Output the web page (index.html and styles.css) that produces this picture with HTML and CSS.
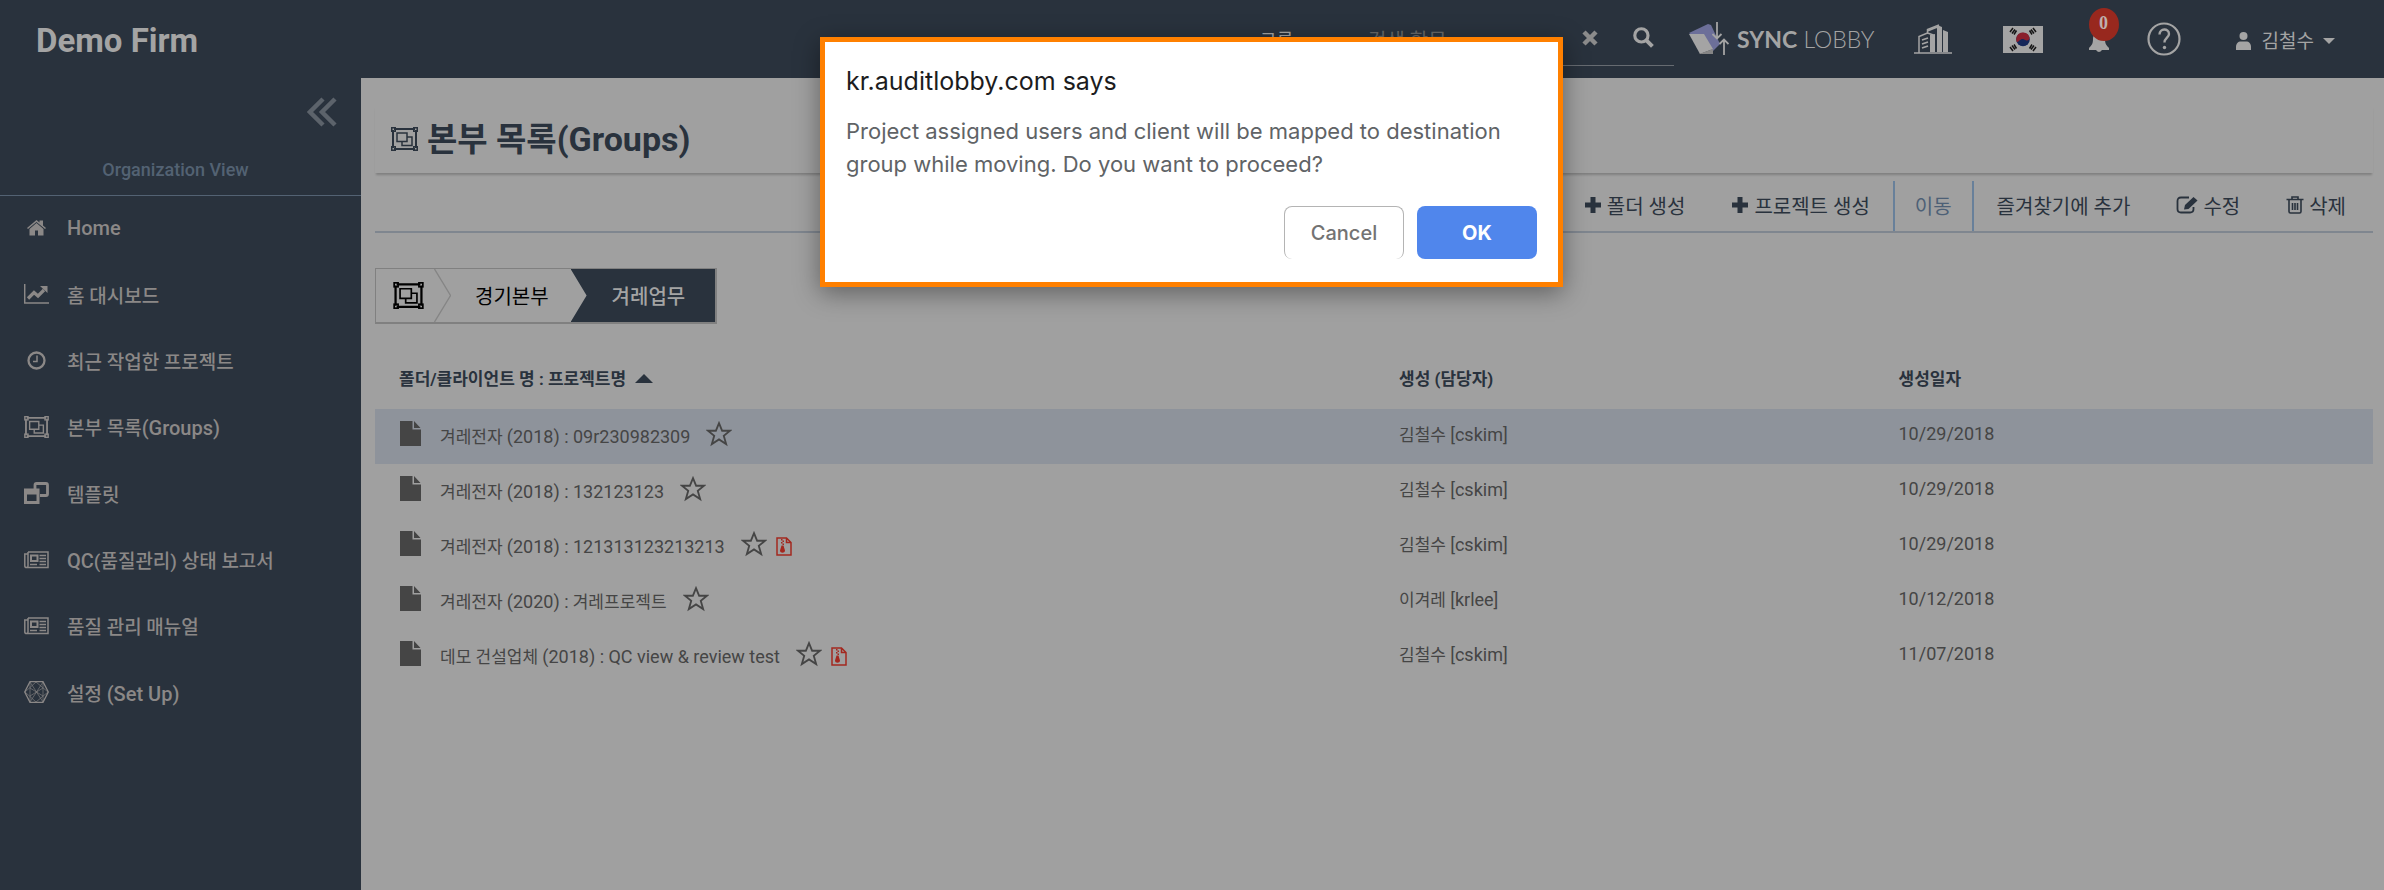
FILE: index.html
```html
<!DOCTYPE html>
<html lang="ko">
<head>
<meta charset="utf-8">
<title>본부 목록(Groups)</title>
<link rel="stylesheet" href="styles.css">
</head>
<body>
<svg class="defs" aria-hidden="true">
  <symbol id="i-group" viewBox="0 0 27 24"><path d="M3 2h21M3 22h21M2 3v18M25 3v18" fill="none" stroke="currentColor" stroke-width="2"/><g fill="none" stroke="currentColor" stroke-width="1.5"><rect x=".75" y=".75" width="3.5" height="3.5" class="knot"/><rect x="22.75" y=".75" width="3.5" height="3.5" class="knot"/><rect x=".75" y="19.75" width="3.5" height="3.5" class="knot"/><rect x="22.75" y="19.75" width="3.5" height="3.5" class="knot"/><path d="M6 6h10v8.500H6zM16.500 10H21v8.500H11v-4"/></g></symbol>
  <symbol id="i-star" viewBox="0 0 24 24"><path d="M12 2l2.900 7h7.300l-5.800 4.700 2.200 7.600L12 17l-6.600 4.300 2.200-7.600L1.800 9h7.300z" fill="none" stroke="currentColor" stroke-width="1.700"/></symbol>
  <symbol id="i-file" viewBox="0 0 21 25"><path d="M0 0h12.500v8.500H21V25H0zM14 0l6.500 7H14z" fill="currentColor"/></symbol>
  <symbol id="i-zip" viewBox="0 0 16 19"><path d="M1 1h9.500L15 5.500V18H1zM10.500 1v4.500H15" fill="none" stroke="currentColor" stroke-width="1.500"/><path d="M5 2h1.500v1.500H5zM6.500 3.500H8V5H6.500zM5 5h1.500v1.500H5zM6.500 6.500H8V8H6.500zM5.500 8.500h2l1.500 5c0 3-5 3-5 0z" fill="currentColor"/></symbol>
  <symbol id="i-plus" viewBox="0 0 18 18"><path d="M6.500 1h5v5.500H17v5h-5.500V17h-5v-5.500H1v-5h5.500z" fill="currentColor"/></symbol>
  <symbol id="i-news" viewBox="0 0 25 18"><g fill="none" stroke="currentColor" stroke-width="1.500"><path d="M4 1h20v15.500H2.500Q.8 16.500.8 15V3H4M4 1v14q0 1.500-1.500 1.500"/><path d="M7 4.500h6.500V10H7z" stroke-width="2"/><path d="M15.500 4.500H22M15.500 7.500H22M15.500 10.500H22M6 13.500h7M15.500 13.500H22"/></g></symbol>
</svg>

<header class="topbar">
  <a class="brand" href="#">Demo Firm</a>
  <form class="search">
    <select aria-label="검색 구분"><option>그룹</option></select>
    <input type="text" placeholder="검색 항목" aria-label="검색 항목">
    <button type="button" aria-label="지우기"><svg class="x" viewBox="0 0 16 16"><path d="M2 2l12 12M14 2L2 14" stroke="currentColor" stroke-width="4.500"/></svg></button>
    <button type="submit" aria-label="검색"><svg class="glass" viewBox="0 0 20 20"><circle cx="8" cy="8" r="6.300" fill="none" stroke="currentColor" stroke-width="3"/><path d="M12.500 12.500l6 6" stroke="currentColor" stroke-width="3.800"/></svg></button>
  </form>
  <a class="sync" href="#">
    <svg viewBox="0 0 40 34"><path d="M0 11L19 2l3 1 9 19-7 7z" fill="#6c6f99"/><path d="M0 12h15l9 15-13 5z" fill="#a4a4a4"/><path d="M10 32l14-5v5z" fill="#858585"/><path d="M28 0v16M23.500 12l4.500 4.500 4.500-4.500M35 33V17M30.500 22l4.500-4.500 4.500 4.500" fill="none" stroke="#a4a4a4" stroke-width="1.800"/></svg>
    <span><b>SYNC</b> LOBBY</span>
  </a>
  <a class="firm" href="#" aria-label="회사"><svg viewBox="0 0 38 30"><path d="M0 29h38" stroke="currentColor" stroke-width="1.300"/><path d="M5 29V12.500l8.500-3.500V5.500L25 1M13.500 9l6 2" fill="none" stroke="currentColor" stroke-width="1.500"/><path d="M16 11l5-1v18h-5zM23 1l5 2v25h-5zM29 6l5 2v20h-5zM13 6l10-4v2l-10 4z" fill="currentColor"/><path d="M8 16l6-2M8 20l6-2M8 24l6-2" stroke="currentColor" stroke-width="1.800"/></svg></a>
  <a class="flag" href="#" aria-label="한국어"><svg viewBox="0 0 40 27"><path d="M0 0h40v27H0z" fill="#a4a4a4"/><circle cx="20" cy="13.500" r="6.800" fill="#15275a"/><path d="M13.500 15.500a6.800 6.800 0 0 1 12.900-4.500c.8 2.500-1.500 4-3.600 3.300-2-.7-2.500-1.800-4.800-.9s-3 3.800-4.500 2.100z" fill="#8a1f2c"/><g stroke="#151515" stroke-width="1.500"><path d="M7 6l3-4M9 7.500l3-4M11 8.500l2.500-4M33 6l-3-4M31 7.500l-3-4M29 8.500L26.500 4.500M7 21l3 4M9 19.500l3 4M11 18.500l2.500 4M33 21l-3 4M31 19.500l-3 4M29 18.500l-2.500 4"/></g></svg></a>
  <a class="bell" href="#" aria-label="알림"><svg viewBox="0 0 20 22"><path d="M10 1c4 0 6 3 6 7 0 5 1.500 6.500 4 9v2h-7q-3 4-6 0H0v-2c2.500-2.500 4-4 4-9 0-4 2-7 6-7z" fill="currentColor"/></svg><span class="badge">0</span></a>
  <a class="help" href="#" aria-label="도움말"><svg viewBox="0 0 34 34"><circle cx="17" cy="17" r="15.500" fill="none" stroke="currentColor" stroke-width="2.200"/><path d="M12.500 12.500c0-6.500 9.500-6.500 9.500-.5 0 3.500-4.500 4-4.500 8.500" fill="none" stroke="currentColor" stroke-width="2.400"/><circle cx="17.500" cy="25.500" r="1.700" fill="currentColor"/></svg></a>
  <button class="user" type="button"><svg class="person" viewBox="0 0 15 18"><circle cx="7.500" cy="4" r="4" fill="currentColor"/><path d="M0 18v-3c0-3.500 2-5.500 5-5.500h5c3 0 5 2 5 5.500v3z" fill="currentColor"/></svg>김철수<svg class="caret" viewBox="0 0 12 6"><path d="M0 0h12L6 6z" fill="currentColor"/></svg></button>
</header>

<div class="layout">
  <aside class="sidebar">
    <button class="collapse" type="button" aria-label="메뉴 접기"><svg viewBox="0 0 30 30"><path d="M16 2L3 15l13 13M28 2L15 15l13 13" fill="none" stroke="currentColor" stroke-width="4.500"/></svg></button>
    <p class="view">Organization View</p>
    <nav class="menu">
      <a href="#"><svg class="small" viewBox="0 0 19 16"><path d="M0 8.500L9.500.5l3 2.500V1h3.500v5l3 2.500-1 1-8.500-7-8.500 7z" fill="currentColor"/><path d="M2.500 9.500l7-6 7 6V16H11v-5H8v5H2.500z" fill="currentColor"/></svg><span class="latin">Home</span></a>
      <a href="#"><svg viewBox="0 0 25 20"><path d="M.7 0v19H25" fill="none" stroke="currentColor" stroke-width="1.500"/><path d="M4 14.500L10 8.500l4 3.500 6-6" fill="none" stroke="currentColor" stroke-width="3.200"/><path d="M16 2h7.500v7z" fill="currentColor"/></svg>홈 대시보드</a>
      <a href="#"><svg class="small" viewBox="0 0 19 19"><circle cx="9.500" cy="9.500" r="8" fill="none" stroke="currentColor" stroke-width="2.300"/><path d="M10 4.500V10.500H6" fill="none" stroke="currentColor" stroke-width="1.500"/></svg>최근 작업한 프로젝트</a>
      <a href="#"><svg><use href="#i-group"/></svg><span>본부 목록<span class="latin">(Groups)</span></span></a>
      <a href="#"><svg viewBox="0 0 25 22"><path d="M11 7V3q0-1.500 1.500-1.500h9.500q1.500 0 1.500 1.500v9q0 1.500-1.500 1.500h-6" fill="none" stroke="currentColor" stroke-width="2.800"/><path d="M0 6.500h15.500V22H0zM3 12.500V19h9.500v-6.500z" fill="currentColor" fill-rule="evenodd"/></svg>템플릿</a>
      <a href="#"><svg><use href="#i-news"/></svg><span><span class="latin">QC</span>(품질관리) 상태 보고서</span></a>
      <a href="#"><svg><use href="#i-news"/></svg>품질 관리 매뉴얼</a>
      <a href="#"><svg viewBox="0 0 25 22"><path d="M6 .7h13L24.300 11 19 21.300H6L.7 11z" fill="none" stroke="currentColor" stroke-width="1.300"/><path d="M6 1l13 20M19 1L6 21M1 11L12 1l12 10-12 10zM6 1v20M19 1v20M6 7l13 8M19 7L6 15" fill="none" stroke="currentColor" stroke-width=".6"/></svg><span>설정 <span class="latin">(Set Up)</span></span></a>
    </nav>
  </aside>

  <main class="content">
    <h1 class="title"><svg><use href="#i-group"/></svg><span>본부 목록<span class="latin">(Groups)</span></span></h1>
    <div class="tools">
      <button type="button"><svg><use href="#i-plus"/></svg>폴더 생성</button>
      <button type="button"><svg><use href="#i-plus"/></svg>프로젝트 생성</button>
      <button type="button" class="move">이동</button>
      <button type="button">즐겨찾기에 추가</button>
      <button type="button"><svg class="edit" viewBox="0 0 22 18"><path d="M13 1.500H5Q1.500 1.500 1.500 5v8q0 3.500 3.500 3.500h9q3.500 0 3.500-3.500v-2" fill="none" stroke="currentColor" stroke-width="1.800"/><path d="M8 13.500l1-4.500 8.500-8 4 3.500-9 8.500z" fill="currentColor"/></svg>수정</button>
      <button type="button"><svg class="bin" viewBox="0 0 17 18"><path d="M0 3.500h17M5.500 3V1h6v2M2.500 4v11.500q0 1.500 1.500 1.500h9q1.500 0 1.500-1.500V4M6 7v7M8.500 7v7M11 7v7" fill="none" stroke="currentColor" stroke-width="1.600"/></svg>삭제</button>
    </div>
    <nav class="crumbs">
      <a href="#" class="root" aria-label="Groups"><svg><use href="#i-group"/></svg></a>
      <svg class="sep" viewBox="0 0 17 54" preserveAspectRatio="none"><path d="M.5 0l16 27-16 27" fill="none" stroke="#858585" stroke-width="1.300"/></svg>
      <a href="#" class="mid">경기본부</a>
      <a href="#" class="here" aria-current="page">겨레업무</a>
    </nav>
    <table class="list">
      <thead><tr><th class="name">폴더/클라이언트 명 : 프로젝트명<svg class="sort" viewBox="0 0 18 9"><path d="M0 9h18L9 0z" fill="currentColor"/></svg></th><th class="owner">생성 (담당자)</th><th>생성일자</th></tr></thead>
      <tbody>
        <tr class="on"><td><div class="cell"><svg class="file"><use href="#i-file"/></svg><a href="#">겨레전자 <span class="latin">(2018) : 09r230982309</span></a><svg class="star"><use href="#i-star"/></svg></div></td><td>김철수 <span class="latin">[cskim]</span></td><td class="latin">10/29/2018</td></tr>
        <tr><td><div class="cell"><svg class="file"><use href="#i-file"/></svg><a href="#">겨레전자 <span class="latin">(2018) : 132123123</span></a><svg class="star"><use href="#i-star"/></svg></div></td><td>김철수 <span class="latin">[cskim]</span></td><td class="latin">10/29/2018</td></tr>
        <tr><td><div class="cell"><svg class="file"><use href="#i-file"/></svg><a href="#">겨레전자 <span class="latin">(2018) : 121313123213213</span></a><svg class="star"><use href="#i-star"/></svg><svg class="zip"><use href="#i-zip"/></svg></div></td><td>김철수 <span class="latin">[cskim]</span></td><td class="latin">10/29/2018</td></tr>
        <tr><td><div class="cell"><svg class="file"><use href="#i-file"/></svg><a href="#">겨레전자 <span class="latin">(2020) :</span> 겨레프로젝트</a><svg class="star"><use href="#i-star"/></svg></div></td><td>이겨레 <span class="latin">[krlee]</span></td><td class="latin">10/12/2018</td></tr>
        <tr><td><div class="cell"><svg class="file"><use href="#i-file"/></svg><a href="#">데모 건설업체 <span class="latin">(2018) : QC view &amp; review test</span></a><svg class="star"><use href="#i-star"/></svg><svg class="zip"><use href="#i-zip"/></svg></div></td><td>김철수 <span class="latin">[cskim]</span></td><td class="latin">11/07/2018</td></tr>
      </tbody>
    </table>
  </main>
</div>

<div class="dialog" role="alertdialog" aria-labelledby="dlg-title" aria-describedby="dlg-text">
  <h2 id="dlg-title">kr.auditlobby.com says</h2>
  <p id="dlg-text">Project assigned users and client will be mapped to destination group while moving. Do you want to proceed?</p>
  <div class="actions"><button type="button" class="cancel">Cancel</button><button type="button" class="ok">OK</button></div>
</div>
</body>
</html>
```

FILE: styles.css
```css
* { box-sizing: border-box; }
body {
  margin: 0;
  min-height: 100vh;
  display: flex;
  flex-direction: column;
  overflow: hidden;
  background: #a0a0a0;
  color: #29323d;
  font-family: Roboto, "Noto Sans CJK KR", sans-serif;
  font-size: 17px;
}
a { color: inherit; text-decoration: none; }
button, input, select { font: inherit; color: inherit; background: none; border: 0; padding: 0; }
svg { display: block; flex: none; }
.defs { position: absolute; width: 0; height: 0; }

.topbar {
  display: flex;
  align-items: center;
  height: 78px;
  background: #29323d;
  color: #a4a4a4;
}
.brand { margin: 0 auto 0 36px; padding-top: 2px; font-size: 33px; font-weight: 700; }
.search {
  display: flex;
  align-items: center;
  width: 434px;
  height: 53px;
  margin: 0 15px 0 0;
  padding: 0 20px 2px 20px;
  border-bottom: 1px solid #666b71;
}
.search select { appearance: none; width: 108px; padding-top: 6px; font-size: 18px; }
.search input { width: 0; flex: 1; padding-top: 6px; font-size: 20px; }
.search input::placeholder { color: #686868; opacity: 1; }
.x { width: 16px; height: 16px; margin-right: 35px; color: #8b8b8b; }
.glass { width: 21px; height: 21px; }
.sync { display: flex; align-items: center; gap: 8px; font-family: Lato, sans-serif; font-size: 23px; font-weight: 300; }
.sync svg { width: 40px; height: 34px; }
.sync b { font-weight: 700; }
.firm { margin-left: 39px; }
.firm svg { width: 38px; height: 30px; }
.flag { margin-left: 51px; }
.flag svg { width: 40px; height: 27px; }
.bell { position: relative; margin-left: 46px; padding-top: 6px; }
.bell svg { width: 20px; height: 22px; }
.badge {
  position: absolute;
  left: 0;
  top: -17px;
  width: 30px;
  height: 33px;
  border-radius: 50%;
  background: #98281e;
  color: #bfb0ae;
  font: 700 18px/31px "Liberation Serif", serif;
  text-align: center;
}
.help { margin-left: 38px; }
.help svg { width: 34px; height: 34px; }
.user { display: flex; align-items: center; margin: 0 49px 0 55px; font-size: 19px; }
.person { width: 15px; height: 18px; margin: 4px 11px 0 0; }
.caret { width: 12px; height: 6px; margin: 4px 0 0 9px; }

.layout { flex: 1; display: flex; }
.sidebar { width: 361px; flex: none; background: #29323d; color: #8b8887; }
.collapse { display: block; margin: 19px 24px 0 auto; color: #5c636b; }
.collapse svg { width: 30px; height: 30px; }
.view {
  margin: 0;
  padding: 31px 10px 13px 0;
  border-bottom: 1px solid #536273;
  color: #536273;
  font-size: 18px;
  font-weight: 500;
  line-height: 24px;
  text-align: center;
}
.menu { display: grid; grid-auto-rows: 1fr; min-height: 531px; font-size: 19px; font-weight: 500; }
.menu a { display: grid; grid-template-columns: 24px 1fr; column-gap: 19px; align-items: center; padding: 0 0 3px 24px; }
.menu svg { width: 25px; height: 22px; }
.menu svg.small { width: 19px; height: 19px; justify-self: center; }
.menu .latin { font-size: 20px; }

.content { flex: 1; padding: 27px 11px 0 14px; }
.title {
  display: flex;
  align-items: center;
  gap: 9px;
  height: 68px;
  margin: 0;
  padding: 0 16px 4px;
  font-size: 33px;
  font-weight: 700;
  box-shadow: 0 3px 2px -1px #808080;
}
.title svg { width: 27px; height: 24px; margin-top: 4px; }
.title .latin { font-size: 34px; }
.tools {
  display: flex;
  justify-content: flex-end;
  height: 60px;
  padding-top: 8px;
  border-bottom: 2px solid #7f868f;
  font-size: 20px;
}
.tools button { display: flex; align-items: center; gap: 5px; padding: 0 23px 2px; }
.tools button:last-child { padding-right: 27px; }
.tools svg { width: 18px; height: 18px; }
.tools svg.edit { width: 22px; }
.tools .move { padding: 0 20px 2px; border: solid #68809a; border-width: 0 2px; color: #4d6076; }

.crumbs {
  display: inline-flex;
  height: 56px;
  margin-top: 35px;
  border: 1px solid #808080;
  border-bottom-width: 2px;
  border-right-width: 2px;
  color: #000;
  font-size: 20px;
}
.crumbs a { display: flex; align-items: center; }
.root { padding: 0 10px 0 17px; }
.root svg { width: 31px; height: 27px; }
.sep { width: 17px; height: 100%; }
.mid { padding: 0 22px 0 24px; }
.here {
  padding: 0 30px 0 41px;
  background: #29323d;
  color: #a4a4a4;
  font-weight: 500;
  clip-path: polygon(0 0, 100% 0, 100% 100%, 0 100%, 16px 50%);
}

.list { width: 100%; margin-top: 24px; border-collapse: collapse; table-layout: fixed; color: #454545; }
.list th { height: 61px; padding: 0 0 3px 25px; color: #29323d; font-weight: 700; text-align: left; }
.list .name { width: 50%; padding-left: 24px; }
.list .owner { width: 25%; }
.sort { display: inline-block; width: 18px; height: 9px; margin: 0 0 2px 9px; }
.list td { height: 55px; padding: 0 0 6px 25px; }
.list .latin { font-size: 18px; }
.cell { display: flex; align-items: center; }
.cell a { padding-top: 4px; }
.on { background: #8e939b; }
.file { width: 21px; height: 25px; margin-right: 19px; }
.star { width: 26px; height: 26px; margin-left: 16px; }
.zip { width: 16px; height: 19px; margin: 6px 0 0 9px; color: #a3281f; }

.dialog {
  position: absolute;
  left: 50%;
  top: 37px;
  width: 743px;
  margin-left: -372px;
  padding: 23px 21px 23px;
  border: 5px solid #ff8000;
  background: #fff;
  color: #606366;
  font-family: Inter, sans-serif;
  box-shadow: 0 6px 24px rgba(0, 0, 0, .4);
}
.dialog h2 { margin: 0 0 18px; color: #1c1c20; font-size: 25px; font-weight: 400; line-height: 32px; }
.dialog p { margin: 0; font-size: 22px; line-height: 33px; }
.actions { display: flex; justify-content: flex-end; gap: 13px; margin-top: 25px; }
.actions button { width: 120px; height: 53px; border-radius: 8px; font-size: 20px; font-weight: 500; }
.cancel { border: solid #b4b4b4; border-width: 1px 1px 0; color: #737373; }
.ok { background: #5086ec; color: #fff; }
.actions .ok { font-weight: 700; }
```
